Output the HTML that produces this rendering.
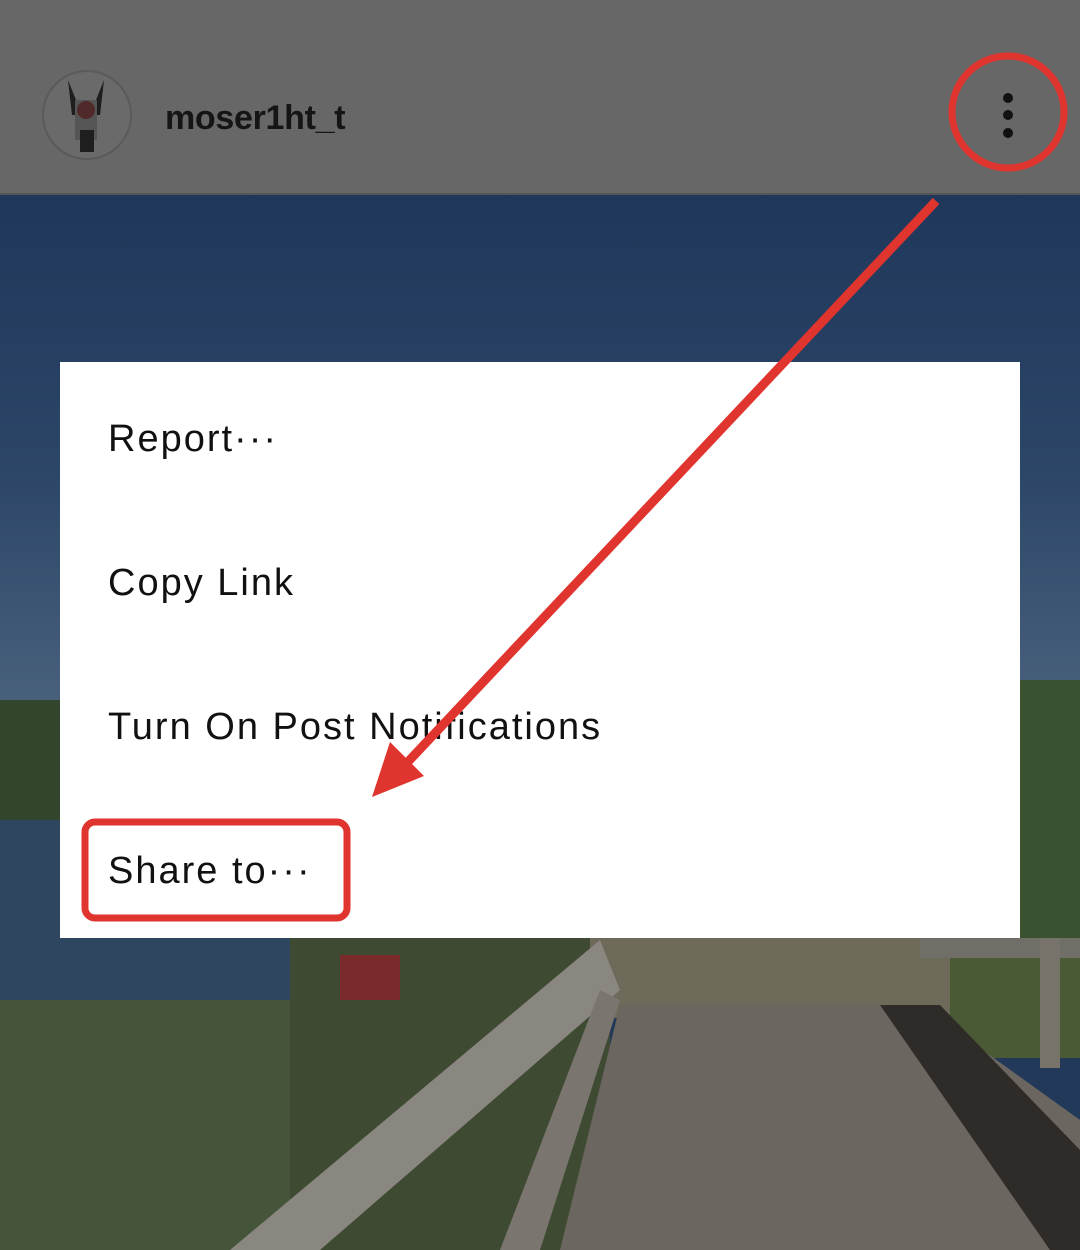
<!DOCTYPE html>
<html><head><meta charset="utf-8"><style>
html,body{margin:0;padding:0}
body{width:1080px;height:1250px;position:relative;overflow:hidden;font-family:"Liberation Sans",sans-serif;background:#22395a}
.hdr{position:absolute;left:0;top:0;width:1080px;height:193px;background:#676767;border-bottom:2px solid #555}
.user{position:absolute;left:165px;top:99px;font-size:34px;font-weight:bold;color:#151515;letter-spacing:-0.3px}
.menu{position:absolute;left:60px;top:362px;width:960px;height:576px;background:#fff}
.it{position:absolute;left:48px;font-size:38px;color:#111;letter-spacing:2px}
</style></head><body>
<svg width="1080" height="1250" style="position:absolute;left:0;top:0">
<defs>
<linearGradient id="sky" x1="0" y1="0" x2="0" y2="1">
<stop offset="0" stop-color="#1f375a"/><stop offset="0.5" stop-color="#2c4668"/><stop offset="1" stop-color="#4e6680"/>
</linearGradient>
</defs>
<rect x="0" y="193" width="1080" height="560" fill="url(#sky)"/>
<rect x="0" y="700" width="80" height="130" fill="#33452d"/>
<rect x="1010" y="680" width="70" height="260" fill="#3b5230"/>
<rect x="0" y="820" width="300" height="430" fill="#2f4660"/>
<rect x="0" y="1000" width="330" height="250" fill="#45553a"/>
<rect x="290" y="938" width="320" height="312" fill="#3f4a33"/>
<rect x="590" y="938" width="490" height="80" fill="#6e6a5a"/>
<rect x="950" y="938" width="130" height="120" fill="#4a5a35"/>
<polygon points="560,1250 620,1005 920,1005 1080,1120 1080,1250" fill="#6b6760"/>
<polygon points="880,1005 940,1005 1080,1150 1080,1250 1050,1250" fill="#2e2b28"/>
<polygon points="230,1250 600,940 620,990 320,1250" fill="#8a8680"/>
<polygon points="500,1250 600,990 620,1000 540,1250" fill="#7a766f"/>
<rect x="340" y="955" width="60" height="45" fill="#7a2a2a"/>
<rect x="920" y="938" width="160" height="20" fill="#6f6f68"/>
<rect x="1040" y="938" width="20" height="130" fill="#77736b"/>
</svg>
<div class="hdr"></div>
<svg width="1080" height="200" style="position:absolute;left:0;top:0">
<circle cx="87" cy="115" r="44" fill="#6a6a6a" stroke="#5a5a5a" stroke-width="2"/>
<path d="M68 80 L72 115 L100 115 L104 80 L96 100 L76 100 Z" fill="#1e1e1e"/>
<rect x="75" y="100" width="22" height="40" fill="#555"/>
<circle cx="86" cy="110" r="9" fill="#502a2a"/>
<rect x="80" y="130" width="14" height="22" fill="#1e1e1e"/>
<circle cx="1008" cy="112" r="56" fill="none" stroke="#e0342e" stroke-width="7"/>
<circle cx="1008" cy="98" r="5" fill="#111"/>
<circle cx="1008" cy="115" r="5" fill="#111"/>
<circle cx="1008" cy="133" r="5" fill="#111"/>
</svg>
<div class="user">moser1ht_t</div>
<div class="menu">
<div class="it" style="top:56px">Report···</div>
<div class="it" style="top:200px">Copy Link</div>
<div class="it" style="top:344px">Turn On Post Notifications</div>
<div class="it" style="top:488px">Share to···</div>
</div>
<svg width="1080" height="1250" style="position:absolute;left:0;top:0">
<line x1="936" y1="201" x2="405" y2="765" stroke="#e0342e" stroke-width="9"/>
<polygon points="372,797 424,776 390,742" fill="#e0342e"/>
<rect x="85" y="822" width="262" height="96" rx="10" fill="none" stroke="#e0342e" stroke-width="7"/>
</svg>
</body></html>
